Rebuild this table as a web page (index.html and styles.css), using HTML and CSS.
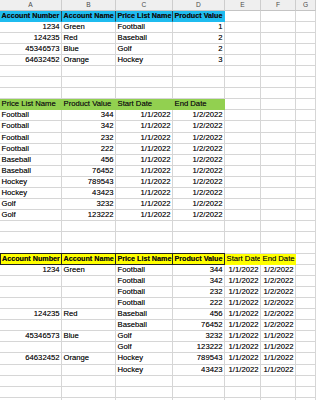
FILE: index.html
```html
<!DOCTYPE html>
<html>
<head>
<meta charset="utf-8">
<link rel="stylesheet" href="styles.css">
</head>
<body>
<div class="sheet">
  <div class="row colhead"><div>A</div><div>B</div><div>C</div><div>D</div><div>E</div><div>F</div><div>G</div></div>

  <div class="row cyan"><div class="c b">Account Number</div><div class="c b">Account Name</div><div class="c b">Price List Name</div><div class="c b last">Product Value</div><div></div><div></div><div></div></div>
  <div class="row"><div class="r">1234</div><div>Green</div><div>Football</div><div class="r">1</div><div></div><div></div><div></div></div>
  <div class="row"><div class="r">124235</div><div>Red</div><div>Baseball</div><div class="r">2</div><div></div><div></div><div></div></div>
  <div class="row"><div class="r">45346573</div><div>Blue</div><div>Golf</div><div class="r">2</div><div></div><div></div><div></div></div>
  <div class="row"><div class="r">64632452</div><div>Orange</div><div>Hockey</div><div class="r">3</div><div></div><div></div><div></div></div>
  <div class="row"><div></div><div></div><div></div><div></div><div></div><div></div><div></div></div>
  <div class="row"><div></div><div></div><div></div><div></div><div></div><div></div><div></div></div>
  <div class="row"><div></div><div></div><div></div><div></div><div></div><div></div><div></div></div>

  <div class="row"><div class="g">Price List Name</div><div class="g">Product Value</div><div class="g">Start Date</div><div class="g">End Date</div><div></div><div></div><div></div></div>
  <div class="row"><div>Football</div><div class="r">344</div><div class="r">1/1/2022</div><div class="r">1/2/2022</div><div></div><div></div><div></div></div>
  <div class="row"><div>Football</div><div class="r">342</div><div class="r">1/1/2022</div><div class="r">1/2/2022</div><div></div><div></div><div></div></div>
  <div class="row"><div>Football</div><div class="r">232</div><div class="r">1/1/2022</div><div class="r">1/2/2022</div><div></div><div></div><div></div></div>
  <div class="row"><div>Football</div><div class="r">222</div><div class="r">1/1/2022</div><div class="r">1/2/2022</div><div></div><div></div><div></div></div>
  <div class="row"><div>Baseball</div><div class="r">456</div><div class="r">1/1/2022</div><div class="r">1/2/2022</div><div></div><div></div><div></div></div>
  <div class="row"><div>Baseball</div><div class="r">76452</div><div class="r">1/1/2022</div><div class="r">1/2/2022</div><div></div><div></div><div></div></div>
  <div class="row"><div>Hockey</div><div class="r">789543</div><div class="r">1/1/2022</div><div class="r">1/2/2022</div><div></div><div></div><div></div></div>
  <div class="row"><div>Hockey</div><div class="r">43423</div><div class="r">1/1/2022</div><div class="r">1/2/2022</div><div></div><div></div><div></div></div>
  <div class="row"><div>Golf</div><div class="r">3232</div><div class="r">1/1/2022</div><div class="r">1/2/2022</div><div></div><div></div><div></div></div>
  <div class="row"><div>Golf</div><div class="r">123222</div><div class="r">1/1/2022</div><div class="r">1/2/2022</div><div></div><div></div><div></div></div>
  <div class="row"><div></div><div></div><div></div><div></div><div></div><div></div><div></div></div>
  <div class="row"><div></div><div></div><div></div><div></div><div></div><div></div><div></div></div>
  <div class="row"><div></div><div></div><div></div><div></div><div></div><div></div><div></div></div>

  <div class="row"><div class="y b box first">Account Number</div><div class="y b box">Account Name</div><div class="y b box">Price List Name</div><div class="y b box">Product Value</div><div class="y">Start Date</div><div class="y">End Date</div><div></div></div>
  <div class="row"><div class="r">1234</div><div>Green</div><div>Football</div><div class="r">344</div><div class="r">1/1/2022</div><div class="r">1/2/2022</div><div></div></div>
  <div class="row"><div></div><div></div><div>Football</div><div class="r">342</div><div class="r">1/1/2022</div><div class="r">1/2/2022</div><div></div></div>
  <div class="row"><div></div><div></div><div>Football</div><div class="r">232</div><div class="r">1/1/2022</div><div class="r">1/2/2022</div><div></div></div>
  <div class="row"><div></div><div></div><div>Football</div><div class="r">222</div><div class="r">1/1/2022</div><div class="r">1/2/2022</div><div></div></div>
  <div class="row"><div class="r">124235</div><div>Red</div><div>Baseball</div><div class="r">456</div><div class="r">1/1/2022</div><div class="r">1/2/2022</div><div></div></div>
  <div class="row"><div></div><div></div><div>Baseball</div><div class="r">76452</div><div class="r">1/1/2022</div><div class="r">1/2/2022</div><div></div></div>
  <div class="row"><div class="r">45346573</div><div>Blue</div><div>Golf</div><div class="r">3232</div><div class="r">1/1/2022</div><div class="r">1/1/2022</div><div></div></div>
  <div class="row"><div></div><div></div><div>Golf</div><div class="r">123222</div><div class="r">1/1/2022</div><div class="r">1/1/2022</div><div></div></div>
  <div class="row"><div class="r">64632452</div><div>Orange</div><div>Hockey</div><div class="r">789543</div><div class="r">1/1/2022</div><div class="r">1/1/2022</div><div></div></div>
  <div class="row"><div></div><div></div><div>Hockey</div><div class="r">43423</div><div class="r">1/1/2022</div><div class="r">1/1/2022</div><div></div></div>
  <div class="row"><div></div><div></div><div></div><div></div><div></div><div></div><div></div></div>
  <div class="row"><div></div><div></div><div></div><div></div><div></div><div></div><div></div></div>
  <div class="row"><div></div><div></div><div></div><div></div><div></div><div></div><div></div></div>
</div>
</body>
</html>
```

FILE: styles.css
```css
html, body {
  margin: 0;
  padding: 0;
  background: #ffffff;
}
body {
  width: 316px;
  height: 400px;
  overflow: hidden;
}
.sheet {
  font-family: "Liberation Sans", Arial, sans-serif;
  font-size: 7.7px;
  color: #161616;
  text-shadow: 0 0 0.4px rgba(0, 0, 0, 0.6);
}
.row {
  display: grid;
  grid-template-columns: 62px 54px 57px 52px 36px 35px 20px;
  height: 11.05px;
}
.row > div {
  box-sizing: border-box;
  border-right: 1px solid #d6d6d6;
  border-bottom: 1px solid #d6d6d6;
  padding: 0 1.5px;
  line-height: 10.5px;
  white-space: nowrap;
  overflow: hidden;
}
.row > .r {
  text-align: right;
}
.colhead {
  height: 11px;
  background: #efefef;
  text-shadow: none;
}
.colhead > div {
  border-right-color: #cdcdcd;
  border-bottom-color: #c4c4c4;
  text-align: center;
  color: #4a4a4a;
  font-size: 6.6px;
  line-height: 10.5px;
}
.b {
  font-weight: bold;
  font-size: 7.2px;
}
.cyan > .c {
  background: #1fbcef;
  border-right-color: #2c4a56;
  border-bottom-color: #1fbcef;
  color: #111111;
}
.cyan > .c.last {
  border-right-color: #1fbcef;
}
.g {
  background: #92d050;
  border-right-color: #92d050 !important;
  border-bottom-color: #92d050 !important;
}
.y {
  background: #ffff00;
  border-right-color: #ffff00 !important;
  border-bottom-color: #ffff00 !important;
}
.y.box {
  border-right-color: #222222 !important;
  border-bottom-color: #222222 !important;
  box-shadow: 0 -1px 0 #222222;
  color: #111111;
}
.y.box.first {
  box-shadow: 0 -1px 0 #222222, inset 1px 0 0 #222222;
  padding-left: 2px;
}
```
